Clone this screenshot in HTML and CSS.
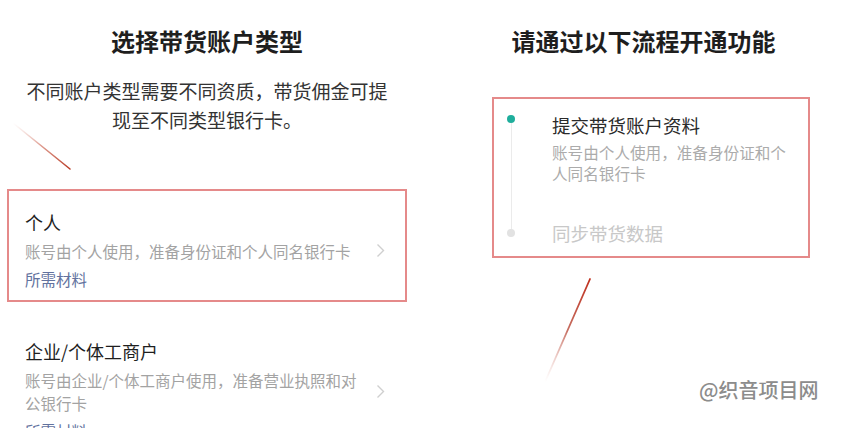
FILE: index.html
```html
<!DOCTYPE html>
<html lang="zh-CN">
<head>
<meta charset="utf-8">
<title>带货账户</title>
<link rel="stylesheet" href="styles.css">
</head>
<body>
<div class="page">
  <section class="col col-left">
    <h1 class="title">选择带货账户类型</h1>
    <p class="subtitle">不同账户类型需要不同资质，带货佣金可提现至不同类型银行卡。</p>
    <div class="list">
      <div class="item item-marked">
        <div class="item-text">
          <div class="item-title">个人</div>
          <div class="item-desc">账号由个人使用，准备身份证和个人同名银行卡</div>
          <div class="item-link">所需材料</div>
        </div>
        <svg class="chev" width="9" height="15" viewBox="0 0 9 15"><polyline points="1.5,1.5 7.5,7.5 1.5,13.5" fill="none" stroke="#cfcfcf" stroke-width="1.4"/></svg>
      </div>
      <div class="item">
        <div class="item-text">
          <div class="item-title">企业/个体工商户</div>
          <div class="item-desc">账号由企业/个体工商户使用，准备营业执照和对公银行卡</div>
          <div class="item-link">所需材料</div>
        </div>
        <svg class="chev" width="9" height="15" viewBox="0 0 9 15"><polyline points="1.5,1.5 7.5,7.5 1.5,13.5" fill="none" stroke="#cfcfcf" stroke-width="1.4"/></svg>
      </div>
    </div>
  </section>
  <section class="col col-right">
    <h1 class="title">请通过以下流程开通功能</h1>
    <div class="steps">
      <div class="step step-first">
        <div class="marker"><span class="dot dot-active"></span><span class="rail"></span></div>
        <div class="step-body">
          <div class="step-title">提交带货账户资料</div>
          <div class="step-desc">账号由个人使用，准备身份证和个人同名银行卡</div>
        </div>
      </div>
      <div class="step step-last">
        <div class="marker"><span class="rail rail-short"></span><span class="dot"></span></div>
        <div class="step-body">
          <div class="step-title step-title-off">同步带货数据</div>
        </div>
      </div>
    </div>
  </section>
</div>
<svg class="arrows" width="842" height="428" viewBox="0 0 842 428">
  <defs>
    <linearGradient id="ga" x1="13" y1="123" x2="70" y2="169" gradientUnits="userSpaceOnUse">
      <stop offset="0" stop-color="#e8b0a8" stop-opacity="0"/>
      <stop offset="0.5" stop-color="#d0705e" stop-opacity="0.7"/>
      <stop offset="1" stop-color="#b83a24"/>
    </linearGradient>
    <linearGradient id="gb" x1="590" y1="279" x2="545" y2="382" gradientUnits="userSpaceOnUse">
      <stop offset="0" stop-color="#c0301e"/>
      <stop offset="0.5" stop-color="#b84a3a" stop-opacity="0.8"/>
      <stop offset="1" stop-color="#e8b0a8" stop-opacity="0"/>
    </linearGradient>
  </defs>
  <line x1="13" y1="123" x2="70" y2="169" stroke="url(#ga)" stroke-width="1.6" stroke-linecap="round"/>
  <line x1="590" y1="279" x2="545" y2="382" stroke="url(#gb)" stroke-width="1.8" stroke-linecap="round"/>
</svg>
<div class="watermark">@织音项目网</div>
</body>
</html>
```
FILE: styles.css
```css
html, body {
  margin: 0;
  padding: 0;
  background: #ffffff;
}
body {
  width: 842px;
  height: 428px;
  overflow: hidden;
  position: relative;
  font-family: "Noto Sans CJK SC", "Noto Sans", sans-serif;
  color: #222;
}
.page {
  display: flex;
  align-items: flex-start;
}
.col-left {
  width: 400px;
  margin-left: 7px;
  flex: none;
}
.col-right {
  flex: 1;
  margin-left: 38px;
}
.title {
  margin: 0;
  padding-top: 25px;
  font-size: 24px;
  line-height: 32px;
  font-weight: 700;
  text-align: center;
  color: #1e1e1e;
}
.subtitle {
  margin: 19px auto 0;
  max-width: 370px;
  font-size: 19px;
  line-height: 29px;
  text-align: center;
  color: #333;
}
.list {
  margin-top: 55px;
  display: flex;
  flex-direction: column;
  gap: 16px;
}
.item {
  display: flex;
  align-items: center;
  gap: 7px;
  padding: 19px 20px 9px 16px;
  border: 2px solid transparent;
}
.item-marked {
  border-color: #e58a8a;
}
.item-text {
  flex: 1;
  min-width: 0;
}
.item-title {
  font-size: 18px;
  line-height: 24px;
  color: #1f1f1f;
}
.item-desc {
  margin-top: 6px;
  font-size: 15.5px;
  line-height: 23px;
  color: #a3a3a3;
}
.item-link {
  margin-top: 5px;
  font-size: 15.5px;
  line-height: 23px;
  color: #62729e;
}
.chev {
  flex: none;
  display: block;
}
.steps {
  margin-top: 40px;
  margin-left: 47px;
  width: 318px;
  box-sizing: border-box;
  border: 2px solid #e58a8a;
  padding: 14px 13px 11px 13px;
}
.step {
  display: flex;
}
.step-first {
  padding-bottom: 37px;
}
.marker {
  width: 8px;
  margin-right: 37px;
  display: flex;
  flex-direction: column;
  align-items: center;
  flex: none;
}
.dot {
  width: 8px;
  height: 8px;
  border-radius: 50%;
  background: #e2e2e2;
  flex: none;
}
.dot-active {
  background: #1fae9c;
  margin-top: 2px;
}
.rail {
  width: 1px;
  flex: 1;
  background: #ebebeb;
  margin-bottom: -37px;
}
.rail-short {
  flex: none;
  height: 8px;
  margin-bottom: 0;
}
.step-body {
  flex: 1;
  min-width: 0;
}
.step-title {
  font-size: 18.5px;
  line-height: 24px;
  color: #2a2a2a;
}
.step-title-off {
  color: #c8c8c8;
}
.step-desc {
  margin-top: 5px;
  font-size: 15.6px;
  line-height: 21px;
  color: #ababab;
  padding-right: 0;
}
.arrows {
  position: absolute;
  left: 0;
  top: 0;
  pointer-events: none;
}
.watermark {
  position: absolute;
  left: 699px;
  top: 377px;
  font-size: 20px;
  line-height: 26px;
  font-weight: 500;
  color: #8c8c8c;
  white-space: nowrap;
}
```
